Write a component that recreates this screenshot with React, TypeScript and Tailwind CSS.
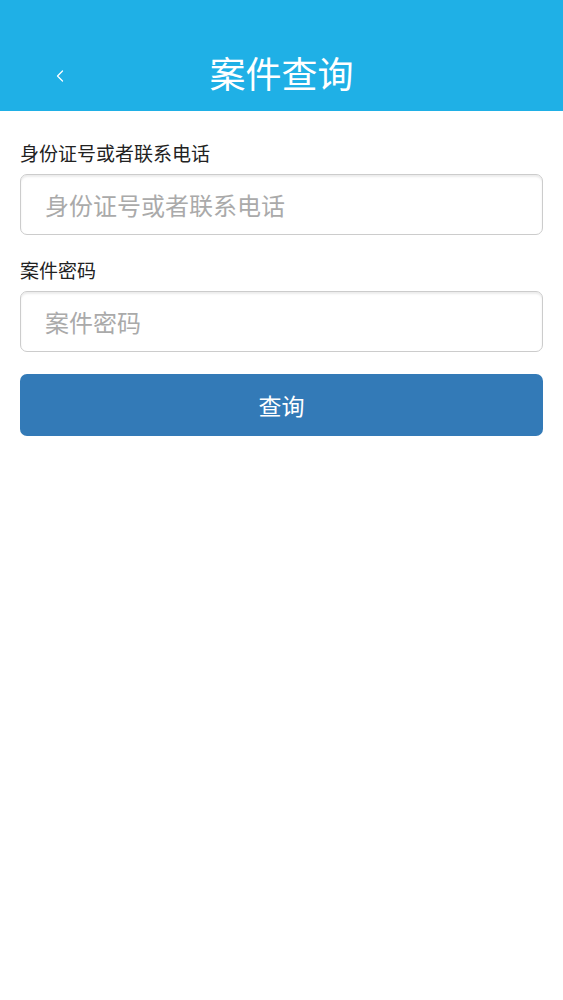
import { ChevronLeft } from 'lucide-react';

const cjk = "font-['Noto_Sans_CJK_SC','Liberation_Sans',sans-serif]";

function Field({ label, placeholder, type = 'text' }: { label: string; placeholder: string; type?: string }) {
  return (
    <div className="flex flex-col">
      <label className="text-[19px] leading-[24px] font-normal text-[#222] mb-[9px]">{label}</label>
      <input
        type={type}
        placeholder={placeholder}
        className="h-[61px] w-full rounded-[7px] border border-[#ccc] bg-white px-[24px] text-[24px] text-[#555] placeholder:text-[#aaa] shadow-[inset_0_2px_2px_rgba(0,0,0,0.08)] outline-none"
      />
    </div>
  );
}

export default function App() {
  return (
    <div className={`min-h-[1000px] bg-white ${cjk}`}>
      <header className="h-[111px] bg-[#1fb0e6] flex items-end pb-[14px] relative">
        <button className="absolute left-[50px] bottom-[25px] text-white" aria-label="back">
          <ChevronLeft className="h-[20px] w-[20px]" strokeWidth={1.5} />
        </button>
        <h1 className="w-full text-center text-white text-[36px] leading-[50px] font-normal">案件查询</h1>
      </header>
      <div className="px-[20px] pt-[30px] flex flex-col">
        <Field label="身份证号或者联系电话" placeholder="身份证号或者联系电话" />
        <div className="h-[23px]" />
        <Field label="案件密码" placeholder="案件密码" type="password" />
        <button className="mt-[22px] h-[62px] w-full rounded-[7px] bg-[#337ab7] text-white text-[23px]">查询</button>
      </div>
    </div>
  );
}
